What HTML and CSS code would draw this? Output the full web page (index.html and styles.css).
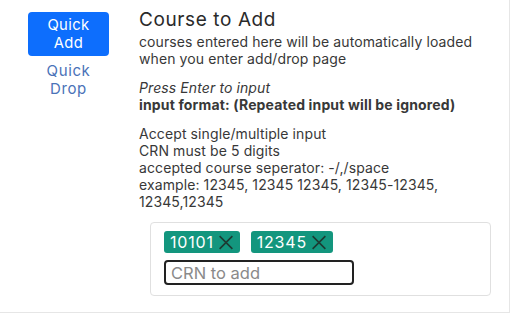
FILE: index.html
```html
<!DOCTYPE html>
<html>
<head>
<meta charset="utf-8">
<link rel="stylesheet" href="styles.css">
</head>
<body>
<div class="frame">
  <div class="layout">
    <nav class="side">
      <button class="btn-add">Quick<br>Add</button>
      <a class="link-drop" href="#">Quick<br>Drop</a>
    </nav>
    <main class="content">
      <h1 class="title">Course to Add</h1>
      <p class="para">courses entered here will be automatically loaded<br>when you enter add/drop page</p>
      <p class="para"><em>Press Enter to input</em><br><strong>input format: (Repeated input will be ignored)</strong></p>
      <p class="para">Accept single/multiple input<br>CRN must be 5 digits<br>accepted course seperator: -/,/space<br>example: 12345, 12345 12345, 12345-12345,<br>12345,12345</p>
      <div class="tagbox">
        <div class="tags">
          <span class="tag">10101<svg class="x" viewBox="0 0 16 16"><path d="M2 2L14 14M14 2L2 14"/></svg></span>
          <span class="tag">12345<svg class="x" viewBox="0 0 16 16"><path d="M2 2L14 14M14 2L2 14"/></svg></span>
        </div>
        <input class="crn" type="text" placeholder="CRN to add">
      </div>
    </main>
  </div>
</div>
</body>
</html>
```
FILE: styles.css
```css
* { box-sizing: border-box; }
html, body { margin: 0; padding: 0; background: #fff; }
body {
  font-family: Inter, "Open Sans", sans-serif;
  color: #383838;
}
.frame {
  width: 510px;
  height: 313px;
  border-right: 1px solid #e6e6e6;
  border-bottom: 1px solid #e6e6e6;
  overflow: hidden;
}
.layout {
  display: flex;
  padding: 12px 0 0 28px;
}
.side {
  width: 81px;
  display: flex;
  flex-direction: column;
  align-items: center;
}
.btn-add {
  width: 81px;
  height: 44px;
  background: #0d6efd;
  color: #fff;
  border: none;
  border-radius: 4px;
  font-family: inherit;
  font-size: 14.8px;
  line-height: 18px;
  letter-spacing: 0.4px;
  padding: 0;
}
.link-drop {
  margin-top: 6px;
  color: #4a72b8;
  text-decoration: none;
  font-size: 15px;
  line-height: 18px;
  letter-spacing: 0.6px;
  text-align: center;
}
.content {
  margin-left: 30px;
  flex: 1;
}
.title {
  margin: -4px 0 0 0;
  font-size: 19px;
  font-weight: 400;
  line-height: 24px;
  letter-spacing: 0.6px;
  color: #2a2a2a;
}
.para {
  margin: 1px 0 12px 0;
  font-size: 14px;
  line-height: 17px;
  letter-spacing: 0.1px;
}
.para strong { letter-spacing: 0.15px; }
.para + .para { margin-top: 0; }
.tagbox {
  margin: 11px 0 0 11px;
  width: 341px;
  height: 74px;
  border: 1px solid #e0e0e0;
  border-radius: 4px;
  padding: 8px 13px;
}
.tags {
  display: flex;
  gap: 11px;
}
.tag {
  display: inline-flex;
  align-items: center;
  height: 22px;
  padding: 0 4px 0 6px;
  background: #13967e;
  color: #fff;
  border-radius: 3px;
  font-size: 16px;
  letter-spacing: 0.8px;
}
.x {
  width: 20px;
  height: 17px;
  margin-left: 2px;
  fill: none;
  stroke: #1d3b33;
  stroke-width: 1.5;
}
.crn {
  display: block;
  margin-top: 7px;
  width: 190px;
  height: 25px;
  border: 2px solid #222;
  border-radius: 4px;
  padding: 0 5px;
  font-family: inherit;
  font-size: 16.5px;
  outline: none;
}
.crn::placeholder { color: #8a8a8a; }
```
